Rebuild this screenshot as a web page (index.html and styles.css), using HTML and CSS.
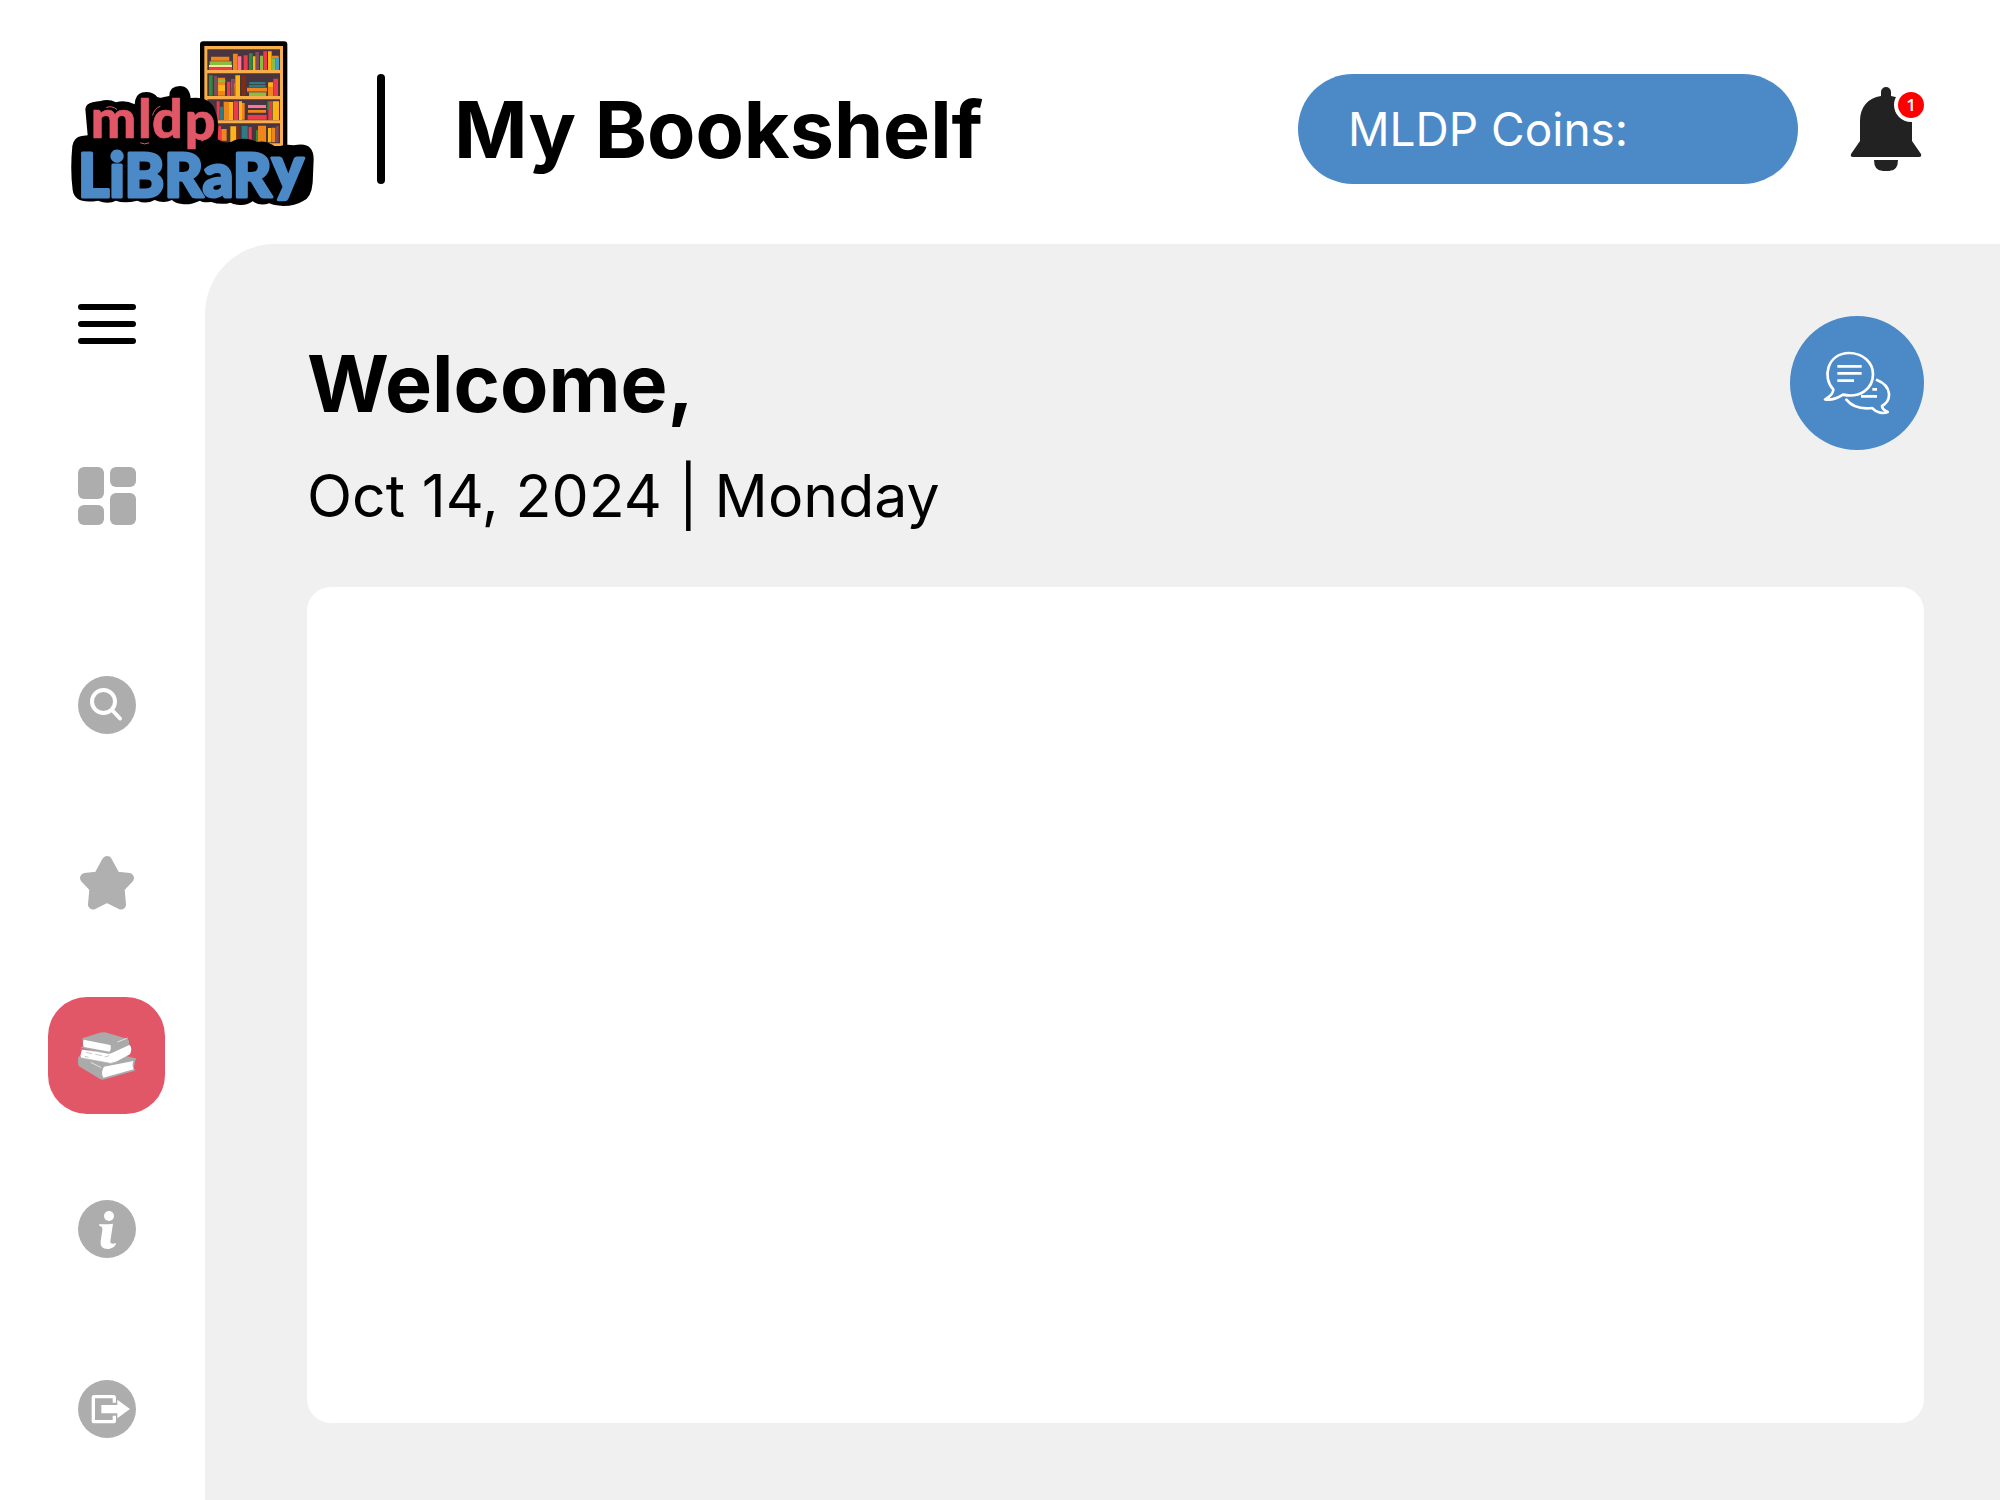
FILE: index.html
```html
<!DOCTYPE html>
<html lang="en">
<head>
<meta charset="utf-8">
<meta name="viewport" content="width=device-width, initial-scale=1">
<title>My Bookshelf</title>
<link rel="stylesheet" href="styles.css">
</head>
<body>
<div class="app">
<header class="header">
  <a class="logo" href="#" aria-label="MLDP Library">
    <svg viewBox="0 15 810 570" width="270" height="190">
      <rect x="420" y="37" width="262" height="330" rx="10" fill="#000"/>
      <rect x="433" y="51" width="236" height="300" fill="#f9ae4c"/>
      <path fill="#49353f" d="M442 61h218v62H442zM442 133h218v68H442zM442 211h218v63H442zM442 283h218v60H442z"/>
      <path fill="#f0851c" d="M453 83h55v12h-55zM519 74h14v49h-14zM636 80h20v8h-20zM473 146h22v54h-22zM514 163h10v37h-10zM624 162h15v39h-15zM561 176h60v10h-60zM491 218h16v55h-16zM546 222h8v50h-8zM564 243h54v8h-54zM484 300h16v35h-16zM594 290h24v50h-24zM634 296h12v44h-12z"/>
      <path fill="#8bbd3f" d="M449 97h66v11h-66zM600 80h9v43h-9zM635 88h12v35h-12zM567 190h52v11h-52zM474 152h22v8h-22z"/>
      <path fill="#f8e3a0" d="M447 108h69v7h-69zM510 230h9v22h-9z"/>
      <path fill="#ee3a4c" d="M447 115h69v8h-69zM551 79h12v44h-12zM610 67h11v56h-11zM501 158h10v43h-10zM640 149h14v52h-14zM561 186h60v4h-60zM470 217h9v56h-9zM521 217h14v56h-14zM563 258h57v14h-57zM625 217h11v56h-11zM471 291h12v49h-12zM566 294h9v40h-9z"/>
      <path fill="#f9789a" d="M534 82h10v41h-10zM514 151h9v25h-9zM564 228h54v9h-54z"/>
      <path fill="#2f8a3c" d="M567 73h11v50h-11zM447 139h11v61h-11zM622 218h6v26h-6zM588 304h6v36h-6z"/>
      <path fill="#fdb515" d="M579 82h10v41h-10zM624 67h11v56h-11zM526 139h14v62h-14zM625 160h14v13h-14zM475 168h20v18h-20zM507 219h12v54h-12zM537 217h9v56h-9zM638 217h19v56h-19zM511 292h18v48h-18zM624 297h9v43h-9z"/>
      <path fill="#7e4b5f" d="M586 69h11v54h-11zM462 141h9v59h-9zM514 151h8v50h-8zM648 291h8v49h-8z"/>
      <path fill="#3f9bd0" d="M648 87h9v36h-9z"/>
      <path fill="#2d7c83" d="M568 159h48v7h-48zM567 168h50v7h-50zM480 233h10v40h-10zM545 291h18v40h-18z"/>
      <path fill="#7d2e15" d="M545 140h12v61h-12zM529 292h9v40h-9z"/>
      <path d="M76 240q2-16 22-20 12-3 24-4 24-8 46 4 28-8 56 6l2-14q6-23 32-23 22 0 34 15 10 4 20 0l16-3q0-30 32-30 28 0 32 36 46-6 66 22 14 22 17 64l-2 38q26 18 52 2 40-10 66 6 28-6 58 16 26-12 52-6 60-14 60 42l-3 70q-4 46-30 56-22 14-58 14-30-2-42-8-28 10-50-6-18 14-46 10-14-2-20-6-30 8-58-2-26 2-34-4-30 14-54 10-20-2-30-12-26 12-52 0-26 14-52 2-40 10-64 0-24 12-54 0-70 12-76-32-8-60-1-132 4-26 28-30l18-2z"/>
      <g class="logo-type">
        <text class="logo-bottom" y="505" x="54">LiBRaR<tspan dy="-22">y</tspan></text>
        <text class="logo-top" x="92 234 276 374" y="328 328 328 332">mldp</text>
      </g>
      <path d="M140 235q16-6 30 6M278 258q4-18 22-26M242 342q12 6 24 0M424 336q16-4 20-16" fill="none" stroke="#e15767" stroke-width="3" stroke-linecap="round"/>
    </svg>
  </a>
  <span class="divider"></span>
  <h1 class="title">My Bookshelf</h1>
  <div class="coins">MLDP Coins:</div>
  <button class="bell" type="button" aria-label="Notifications">
    <svg viewBox="0 0 74 84" width="74" height="84">
      <path fill="#222" d="M31 9V5a5 5 0 0 1 10 0v4C54 11 62 20 62 34v20l9 13q1 3-2 3H3q-3 0-2-3l9-13V34C10 20 18 11 31 9zM24 73h24q0 11-9 11h-6q-9 0-9-11z"/>
      <circle cx="61" cy="18" r="17" fill="#fff"/>
      <circle cx="61" cy="18" r="13" fill="#f00"/>
      <text class="badge" x="61" y="24" text-anchor="middle">1</text>
    </svg>
  </button>
</header>
<div class="body">
  <nav class="sidebar" aria-label="Main">
    <button class="item" type="button" aria-label="Menu">
      <svg viewBox="0 0 58 58" width="58" height="58"><path d="M3 12h52M3 29h52M3 46h52" stroke="#000" stroke-width="6" stroke-linecap="round"/></svg>
    </button>
    <a class="item" href="#" aria-label="Dashboard">
      <svg viewBox="0 0 58 58" width="58" height="58" fill="#adadad"><rect width="26" height="32" rx="6"/><rect x="32" width="26" height="20" rx="6"/><rect y="38" width="26" height="20" rx="6"/><rect x="32" y="26" width="26" height="32" rx="6"/></svg>
    </a>
    <a class="item item-search" href="#" aria-label="Search">
      <svg viewBox="0 0 58 58" width="58" height="58"><circle cx="29" cy="29" r="29" fill="#adadad"/><g fill="none" stroke="#fff" stroke-linecap="round"><circle cx="25.500" cy="25.500" r="11.500" stroke-width="4"/><path d="M34 34l8 8.500" stroke-width="4"/></g></svg>
    </a>
    <a class="item item-star" href="#" aria-label="Favourites">
      <svg viewBox="0 0 58 58" width="58" height="58"><path d="M29 7l8.500 15.500L51 24 41.500 34 43 50.500 29 43.500 15 50.500 16.500 34 7 24l13.500-1.500z" fill="#b0b0b0" stroke="#b0b0b0" stroke-width="10" stroke-linejoin="round"/></svg>
    </a>
    <a class="item item-active" href="#" aria-label="My Bookshelf" aria-current="page">
      <svg viewBox="0 0 174 174" width="58" height="58">
        <path fill="#aaa" d="M0 92l12-12 60 20 50-18 50 12q4 2 0 5l-5 26 4 3q2 3-3 4L80 157q-8 3-14-1L3 118q-4-4-3-26z"/>
        <path fill="#fff" d="M78 119l88-17q-5 12 1 25L76 152q-9-17 2-33z"/>
        <path fill="none" stroke="#fff" stroke-width="2" d="M38 106l32 16"/>
        <path fill="#fff" d="M12 68l84 8 56-24q14 10 4 30l-48 25q-10 4-18 1L10 93q-5-8 2-25z"/>
        <path fill="none" stroke="#aaa" stroke-width="2" d="M8 66l86 13 58-26M10 93l88 16 14-4M24 76l18 4M52 82l20 4M20 88l12 3M80 90l14-4"/>
        <path fill="#aaa" d="M13 34l52-17q8-2 16-1l66 19q6 2 6 7v12l-50 23q-8 4-18 2L11 63q-5-3 5-6z"/>
        <path fill="#fff" d="M17 38l80 16q4 8-2 20L18 60q-6-10-1-22z"/>
        <path fill="none" stroke="#fff" stroke-width="2" d="M118 45l31-12"/>
      </svg>
    </a>
    <a class="item item-info" href="#" aria-label="Information">
      <svg viewBox="0 0 174 174" width="58" height="58"><circle cx="87" cy="87" r="87" fill="#adadad"/><circle cx="93" cy="48" r="15" fill="#fff"/><path fill="#fff" d="M64 72q20 2 41-1-4 26-8 52-1 12 17 6-1 13-21 18-28 2-25-24l5-32q1-13-9-13z"/></svg>
    </a>
    <a class="item item-logout" href="#" aria-label="Log out">
      <svg viewBox="0 0 174 174" width="58" height="58"><circle cx="87" cy="87" r="87" fill="#adadad"/><path fill="#fff" d="M48 45h58q8 0 8 8v15h-10V55H51v65h53v-13h10v15q0 8-8 8H48q-7 0-7-8V53q0-8 7-8zM70 75h48V59l38 28-38 28V100H70z"/></svg>
    </a>
  </nav>
  <main class="main">
    <div class="intro">
      <h2 class="welcome">Welcome,</h2>
      <button class="chat" type="button" aria-label="Messages">
        <svg viewBox="0 0 204 198" width="68" height="66" fill="none" stroke="#fff" stroke-width="8" stroke-linejoin="round" stroke-linecap="round">
          <path d="M31 118C-3 84 12 10 78 9c42 0 72 28 72 64 0 44-40 72-90 61-20 13-38 17-54 14 18-9 25-18 25-30z"/>
          <path d="M43 49h73M43 70h73M43 92h50M148 118h14M114 139h48" stroke-linecap="butt"/>
          <path d="M162 90c44 18 46 60 15 78 0 10 8 13 17 18-12 6-34 3-46-12-34 4-62-5-78-25"/>
        </svg>
      </button>
    </div>
    <p class="date">Oct 14, 2024 | Monday</p>
    <section class="shelf" aria-label="Books"></section>
  </main>
</div>
</div>
</body>
</html>
```
FILE: styles.css
```css
* { box-sizing: border-box; }
body {
  margin: 0;
  background: #fff;
  color: #000;
  font-family: Inter, "Liberation Sans", sans-serif;
}
h1, h2, p { margin: 0; }
button { border: 0; padding: 0; background: none; font: inherit; cursor: pointer; }
svg { display: block; }

.app { display: flex; flex-direction: column; min-height: 100vh; }

.header {
  display: flex;
  align-items: center;
  min-height: 244px;
  padding: 14px 76px 0 60px;
}
.divider { width: 8px; height: 110px; margin: 0 69px 0 47px; border-radius: 4px; background: #000; }
.title { font-size: 79px; line-height: 100px; font-weight: 700; white-space: nowrap; }
.coins {
  width: 500px;
  margin-left: auto;
  padding: 0 50px;
  border-radius: 55px;
  background: #4b89c7;
  color: #fff;
  font-size: 46px;
  line-height: 110px;
  white-space: nowrap;
}
.bell { margin-left: 52px; }
.badge { fill: #fff; font: 600 17px "Open Sans", sans-serif; }

.logo-type { font-family: Lato, sans-serif; font-weight: 900; stroke-linejoin: round; }
.logo-top { font-size: 162px; fill: #e15767; stroke: #e15767; stroke-width: 2px; }
.logo-bottom { font-size: 180px; fill: #4b89c7; stroke: #4b89c7; stroke-width: 9px; }

.body { display: flex; flex: 1; }
.sidebar {
  display: flex;
  flex-direction: column;
  align-items: center;
  width: 205px;
  padding: 21px 0 32px 8px;
}
.item {
  display: flex;
  align-items: center;
  justify-content: center;
  width: 117px;
  height: 117px;
  border-radius: 39px;
}
.item + .item { margin-top: 55px; }
.item + .item-search { margin-top: 92px; }
.item + .item-star { margin-top: 61px; }
.item + .item-active { margin-top: 56px; }
.item + .item-info { margin-top: 56px; }
.item + .item-logout { margin-top: 63px; }
.item-active { background: #e15767; }

.main {
  display: flex;
  flex: 1;
  flex-direction: column;
  padding: 72px 76px 77px 102px;
  border-top-left-radius: 70px;
  background: #f0f0f0;
}
.intro { display: flex; align-items: center; justify-content: space-between; }
.welcome { font-size: 79px; line-height: 100px; font-weight: 700; }
.chat {
  display: flex;
  align-items: center;
  justify-content: center;
  width: 134px;
  height: 134px;
  border-radius: 50%;
  background: #4b89c7;
}
.date { margin: 9px 0 54px; font-size: 59px; line-height: 74px; }
.shelf { flex: 1; border-radius: 24px; background: #fff; }
```
